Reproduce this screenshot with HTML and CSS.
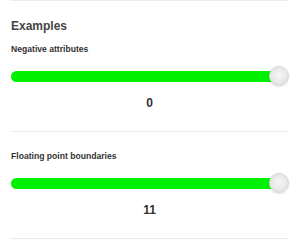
FILE: index.html
```html
<!DOCTYPE html>
<html lang="en">

<head>
    <meta charset="UTF-8">
    <meta name="viewport" content="width=device-width, initial-scale=1.0">
    <title>Examples</title>
    <link rel="stylesheet" href="styles.css">
</head>

<body>
    <div class="panel">
        <section class="group first">
            <h2>Examples</h2>
            <div class="label">Negative attributes</div>
            <div class="slider">
                <div class="track"></div>
                <span class="thumb"></span>
            </div>
            <div class="value">0</div>
        </section>

        <section class="group">
            <div class="label">Floating point boundaries</div>
            <div class="slider">
                <div class="track"></div>
                <span class="thumb"></span>
            </div>
            <div class="value">11</div>
        </section>
    </div>
</body>

</html>
```

FILE: styles.css
```css
:root {
    --text-color: #333;
    --line-color: #ececec;
    --fill-color: #00f000;
}

* {
    box-sizing: border-box;
    margin: 0;
    padding: 0;
}

body {
    font-family: 'Liberation Sans', Arial, sans-serif;
    color: var(--text-color);
    background: #fff;
}

.panel {
    margin: 0 11px 0 10px;
    border-top: 1px solid var(--line-color);
}

.group {
    border-bottom: 1px solid var(--line-color);
    padding: 18px 0 20px;
}

.group.first {
    padding-top: 18px;
}

h2 {
    font-size: 12px;
    line-height: 15px;
    font-weight: 700;
    color: #444;
    margin-bottom: 9px;
    padding-left: 1px;
}

.label {
    font-size: 8.6px;
    line-height: 12px;
    font-weight: 700;
    color: #333;
    margin-bottom: 11px;
    padding-left: 1px;
}

.slider {
    position: relative;
    height: 20px;
    display: flex;
    align-items: center;
    padding-left: 1px;
    padding-right: 9px;
}

.track {
    flex: 1;
    height: 11px;
    border-radius: 6px;
    background: var(--fill-color);
}

.thumb {
    position: absolute;
    right: 0;
    top: 0;
    width: 20px;
    height: 20px;
    border-radius: 50%;
    background: radial-gradient(circle at 50% 45%, #f6f6f6 0, #e8e8e8 55%, #dcdcdc 100%);
    border: 1px solid #d8d8d8;
    box-shadow: 0 1px 2px rgba(0, 0, 0, 0.12);
}

.value {
    text-align: center;
    font-size: 12px;
    line-height: 15px;
    font-weight: 700;
    margin-top: 10px;
}
```
